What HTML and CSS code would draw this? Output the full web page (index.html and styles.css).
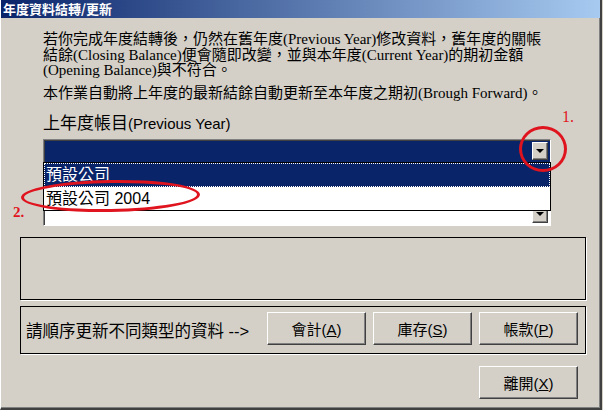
FILE: index.html
```html
<!DOCTYPE html>
<html lang="zh-Hant">
<head>
  <meta charset="UTF-8" />
  <title>年度資料結轉/更新</title>
  <link rel="stylesheet" href="styles.css">
</head>
<body>

  <div class="dialog">
    <div class="titlebar">年度資料結轉/更新</div>

    <div class="content">
      <p class="note">
        若你完成年度結轉後，仍然在舊年度(Previous Year)修改資料，舊年度的關帳<br>
        結餘(Closing Balance)便會隨即改變，並與本年度(Current Year)的期初金額<br>
        (Opening Balance)與不符合。
      </p>
      <p class="note">本作業自動將上年度的最新結餘自動更新至本年度之期初(Brough Forward)。</p>

      <div class="field-label">上年度帳目<span class="en">(Previous Year)</span></div>

      <div class="combos">
        <div class="combo selected">
          <div class="combo-value"></div>
          <div class="combo-btn"><span class="arrow"></span></div>
        </div>
        <div class="combo">
          <div class="combo-value"></div>
          <div class="combo-btn"><span class="arrow"></span></div>
        </div>

        <!-- open dropdown list -->
        <ul class="dropdown">
          <li class="active">預設公司</li>
          <li>預設公司 2004</li>
        </ul>
      </div>
    </div>

    <div class="group status"></div>

    <div class="group actions">
      <span class="hint">請順序更新不同類型的資料 --&gt;</span>
      <div class="buttons">
        <button class="btn">會計(<u>A</u>)</button>
        <button class="btn">庫存(<u>S</u>)</button>
        <button class="btn">帳款(<u>P</u>)</button>
      </div>
    </div>

    <div class="footer">
      <button class="btn">離開(<u>X</u>)</button>
    </div>

    <!-- red annotations -->
    <span class="mark mark-1">1.</span>
    <span class="ring ring-1"></span>
    <span class="mark mark-2">2.</span>
    <span class="ring ring-2"></span>
  </div>

</body>
</html>
```

FILE: styles.css
```css
/* === WINDOW === */
body {
  margin: 0;
  background: #d4d0c8;
  font-family: "Liberation Sans", "Noto Sans CJK TC", sans-serif;
  color: #000;
}

.dialog {
  position: relative;
  width: 599px;
  height: 408px;
  background: #d4d0c8;
  border-left: 1px solid #fff;
  border-right: 2px solid #404040;
  border-bottom: 2px solid #404040;
  box-shadow: inset -1px -1px 0 #808080;
  overflow: hidden;
}

.titlebar {
  height: 18px;
  line-height: 18px;
  padding-left: 3px;
  margin-left: -1px;
  background: linear-gradient(to right, #0a246a, #a6caf0);
  color: #fff;
  font-weight: bold;
  font-size: 13px;
  font-family: "Noto Sans CJK TC", sans-serif;
}

/* === TEXT === */
.content {
  padding: 14px 0 0 42px;
}

.note {
  margin: 0 0 7px;
  font-family: "Liberation Serif", "Noto Sans CJK TC", serif;
  font-size: 15px;
  line-height: 15.5px;
  white-space: nowrap;
}

.field-label {
  margin-top: 14px;
  font-size: 17px;
  line-height: 18px;
}

.field-label .en {
  font-size: 15px;
}

/* === COMBO BOXES === */
.combos {
  position: relative;
  width: 508px;
  margin-top: 6px;
  display: flex;
  flex-direction: column;
  gap: 39px;
}

.combo {
  display: flex;
  height: 18px;
  padding: 2px;
  background: #fff;
  border-top: 1px solid #808080;
  border-left: 1px solid #808080;
  border-right: 1px solid #fff;
  border-bottom: 1px solid #fff;
  box-shadow: inset 1px 1px 0 #404040;
}

.combo.selected {
  background: #0a246a;
}

.combo-value {
  flex: 1;
}

.combo-btn {
  width: 16px;
  height: 18px;
  box-sizing: border-box;
  background: #d4d0c8;
  border-top: 1px solid #fff;
  border-left: 1px solid #fff;
  border-right: 1px solid #404040;
  border-bottom: 1px solid #404040;
  box-shadow: inset -1px -1px 0 #808080;
  display: flex;
  align-items: center;
  justify-content: center;
}

.arrow {
  width: 0;
  height: 0;
  border-left: 4px solid transparent;
  border-right: 4px solid transparent;
  border-top: 4px solid #000;
}

.dropdown {
  position: absolute;
  top: 23px;
  left: 0;
  width: 506px;
  margin: 0;
  padding: 0;
  list-style: none;
  background: #fff;
  border: 1px solid #000;
}

.dropdown li {
  height: 23px;
  line-height: 23px;
  padding-left: 2px;
  font-size: 16px;
  box-sizing: border-box;
}

.dropdown li.active {
  background: #0a246a;
  color: #fff;
  outline: 1px dotted #fff;
  outline-offset: -1px;
  height: 24px;
}

/* === GROUP BOXES === */
.group {
  margin: 0 14px 0 19px;
  border: 1px solid #000;
  box-shadow: 1px 1px 0 #fff;
}

.status {
  margin-top: 11px;
  height: 61px;
}

.actions {
  margin-top: 6px;
  height: 46px;
  display: flex;
  align-items: center;
  padding: 0 7px 0 5px;
}

.hint {
  font-size: 16.5px;
}

.buttons {
  margin-left: auto;
  display: flex;
  gap: 7px;
  margin-top: -3px;
}

/* === BUTTONS === */
.btn {
  width: 99px;
  height: 33px;
  padding: 0;
  background: #d4d0c8;
  font-family: "Liberation Sans", "Noto Sans CJK TC", sans-serif;
  font-size: 15px;
  color: #000;
  border-top: 1px solid #fff;
  border-left: 1px solid #fff;
  border-right: 1px solid #404040;
  border-bottom: 1px solid #404040;
  box-shadow: inset -1px -1px 0 #808080;
}

.footer {
  display: flex;
  justify-content: flex-end;
  padding: 12px 22px 0 0;
}

/* === ANNOTATIONS === */
.mark {
  position: absolute;
  color: #e0141e;
  font-family: "Liberation Serif", serif;
}

.mark-1 {
  left: 561px;
  top: 108px;
  font-size: 16px;
}

.mark-2 {
  left: 12px;
  top: 204px;
  font-size: 15px;
  font-weight: bold;
}

.ring {
  position: absolute;
  border: 3px solid #e0141e;
  border-radius: 50%;
  box-sizing: border-box;
}

.ring-1 {
  left: 518px;
  top: 126px;
  width: 48px;
  height: 46px;
}

.ring-2 {
  left: 20px;
  top: 180px;
  width: 179px;
  height: 32px;
  transform: rotate(-1deg);
}
```
